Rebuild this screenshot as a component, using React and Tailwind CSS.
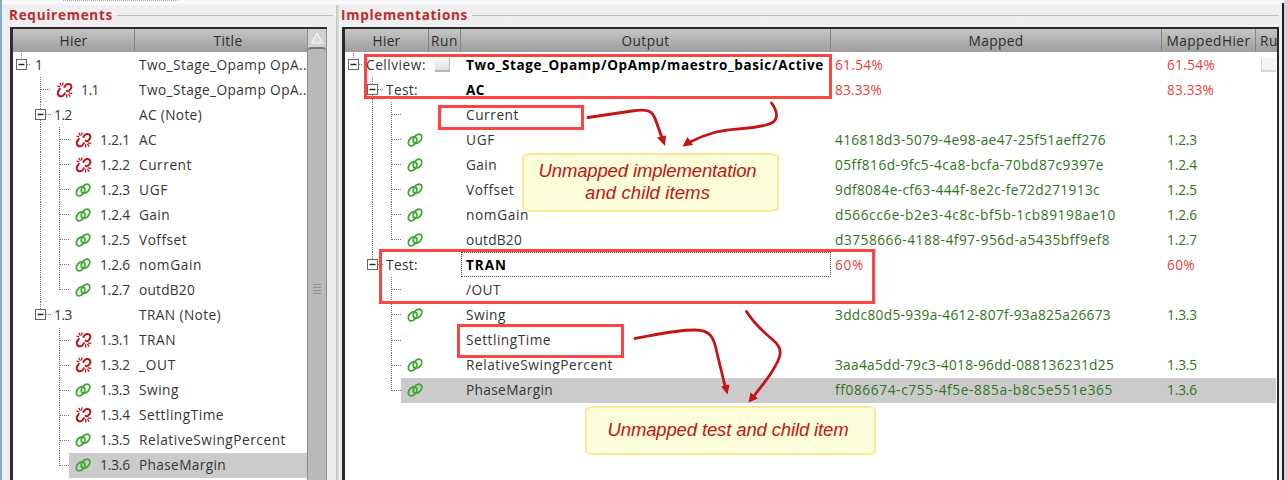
import React, { useLayoutEffect, useRef } from "react";

// Text justified to a given pixel width through letter spacing.
function T({ children, w, className = "" }) {
  const ref = useRef(null);
  useLayoutEffect(() => {
    const el = ref.current;
    if (!w) return;
    el.style.letterSpacing = "0px";
    const natural = el.getBoundingClientRect().width;
    el.style.letterSpacing = `${(w - natural) / (String(children).length)}px`;
  }, [children, w]);
  return (
    <span ref={ref} className={`inline-block whitespace-pre ${className}`}>
      {children}
    </span>
  );
}

function LinkIcon() {
  return (
    <svg width="16" height="16" viewBox="0 0 16 16" fill="none" stroke="#3fa535" strokeWidth="1.800" className="shrink-0">
      <ellipse cx="5.600" cy="9.300" rx="3.500" ry="5.100" transform="rotate(42 5.600 9.300)" />
      <ellipse cx="10.500" cy="6.700" rx="3.500" ry="5.100" transform="rotate(42 10.500 6.700)" />
    </svg>
  );
}

function BrokenIcon() {
  return (
    <svg width="17" height="16" viewBox="0 0 16 16" fill="none" stroke="#b5121b" strokeLinecap="round" className="-mr-px shrink-0">
      <path strokeWidth="2" d="M7.800 5L9.200 3.100C10.300 1.700 12.500 1.500 13.800 2.600C15.200 3.700 15.200 5.700 14 7.100L12.600 8.600C12 9.200 10.900 9.300 10.200 8.700" />
      <path strokeWidth="2" d="M3.300 6.800L2.100 8.700C0.900 10.300 1 12.500 2.400 13.600C3.900 14.800 6 14.500 7.200 13L8.400 11.200" />
      <path strokeWidth="1.300" d="M3.600 1.400L4.600 3.300M6.400 0.900L6.200 2.800M1.400 4.200L3.200 4.700M10.200 12.700L10.200 15M12.200 12.200L13.400 14.300M13 10.800L15.100 11.300" />
    </svg>
  );
}

// Dotted branches of one row: continuing verticals, expander box or leaf stub.
function Guides({ kind, last }) {
  const dot = { stroke: "#777", strokeWidth: 1, strokeDasharray: "1 1" };
  return (
    <svg width="69" height="25" viewBox="0 0 69 25" className="absolute left-0 top-0">
      {kind === "root" && <path d="M8.5 1V7M14 12.500H18" {...dot} />}
      {kind === "leaf1" && <path d="M27.500 0V25M28 12.500H38" {...dot} />}
      {kind === "node" && (
        <path d={last ? "M27.500 0V7M33 12.500H38" : "M27.500 0V25M33 12.500H38"} {...dot} />
      )}
      {kind === "leaf" && !last && <path d="M27.500 0V25" {...dot} />}
      {(kind === "root" || kind === "node") && (
        <g transform={kind === "root" ? "translate(3 7)" : "translate(22 7)"}>
          <rect x="0.500" y="0.500" width="10" height="10" fill="#fff" stroke="#666" />
          <path d="M2.500 5.500H8.500" stroke="#222" strokeWidth="1.400" />
        </g>
      )}
    </svg>
  );
}

function Branch({ end }) {
  return (
    <svg width="12" height="25" viewBox="0 0 12 25" className="absolute left-[46px] top-0">
      <path d={end ? "M0.500 0V13M1 12.500H10" : "M0.500 0V25M1 12.500H10"} fill="none" stroke="#777" strokeDasharray="1 1" />
    </svg>
  );
}

const REQ = [
  ["root", "1", "Two_Stage_Opamp OpA..", 168],
  ["leaf1", "1.1", "Two_Stage_Opamp OpA..", 168, "x"],
  ["node", "1.2", "AC (Note)", 63],
  ["leaf", "1.2.1", "AC", 18, "x"],
  ["leaf", "1.2.2", "Current", 53, "x"],
  ["leaf", "1.2.3", "UGF", 29, "o"],
  ["leaf", "1.2.4", "Gain", 31, "o"],
  ["leaf", "1.2.5", "Voffset", 48, "o"],
  ["leaf", "1.2.6", "nomGain", 63, "o"],
  ["leaf", "1.2.7", "outdB20", 56, "o", "end"],
  ["node", "1.3", "TRAN (Note)", 82, "", "last"],
  ["leaf", "1.3.1", "TRAN", 37, "x", "tail"],
  ["leaf", "1.3.2", "_OUT", 37, "x", "tail"],
  ["leaf", "1.3.3", "Swing", 40, "o", "tail"],
  ["leaf", "1.3.4", "SettlingTime", 85, "x", "tail"],
  ["leaf", "1.3.5", "RelativeSwingPercent", 147, "o", "tail"],
  ["leaf", "1.3.6", "PhaseMargin", 87, "o", "tail end"],
];

const IMPL = [
  { k: "root", h: "Cellview:", hw: 60, t: "Two_Stage_Opamp/OpAmp/maestro_basic/Active", w: 358, m: "61.54%", mw: 48, n: "61.54%", nw: 48, run: true },
  { k: "node", h: "Test:", hw: 32, t: "AC", w: 19, m: "83.33%", mw: 47, n: "83.33%", nw: 47 },
  { k: "leaf", t: "Current", w: 53 },
  { k: "leaf", i: 1, t: "UGF", w: 29, m: "416818d3-5079-4e98-ae47-25f51aeff276", mw: 271, n: "1.2.3" },
  { k: "leaf", i: 1, t: "Gain", w: 31, m: "05ff816d-9fc5-4ca8-bcfa-70bd87c9397e", mw: 269, n: "1.2.4" },
  { k: "leaf", i: 1, t: "Voffset", w: 48, m: "9df8084e-cf63-444f-8e2c-fe72d271913c", mw: 265, n: "1.2.5" },
  { k: "leaf", i: 1, t: "nomGain", w: 63, m: "d566cc6e-b2e3-4c8c-bf5b-1cb89198ae10", mw: 281, n: "1.2.6" },
  { k: "leaf", i: 1, t: "outdB20", w: 56, m: "d3758666-4188-4f97-956d-a5435bff9ef8", mw: 275, n: "1.2.7", end: true },
  { k: "node", h: "Test:", hw: 32, t: "TRAN", w: 41, m: "60%", mw: 29, n: "60%", nw: 28, focus: true, last: true },
  { k: "leaf", t: "/OUT", w: 35, tail: true },
  { k: "leaf", i: 1, t: "Swing", w: 40, m: "3ddc80d5-939a-4612-807f-93a825a26673", mw: 276, n: "1.3.3", tail: true },
  { k: "leaf", t: "SettlingTime", w: 85, tail: true },
  { k: "leaf", i: 1, t: "RelativeSwingPercent", w: 147, m: "3aa4a5dd-79c3-4018-96dd-088136231d25", mw: 279, n: "1.3.5", tail: true },
  { k: "leaf", i: 1, t: "PhaseMargin", w: 87, m: "ff086674-c755-4f5e-885a-b8c5e551e365", mw: 278, n: "1.3.6", tail: true, end: true, sel: true },
];

function ReqRow({ row }) {
  const [kind, num, title, w, icon, flags = ""] = row;
  const leaf = kind === "leaf";
  const sel = num === "1.3.6";
  const indent = { root: "pl-[22px]", leaf1: "pl-[43px]", node: "pl-[41px]", leaf: "pl-[62px]" }[kind];
  return (
    <div className="relative flex h-[25.05px] w-[294px] shrink-0 items-center">
      {sel && <div className="absolute inset-y-0 left-[56px] right-0 bg-[#cbcbcb]" />}
      <Guides kind={kind} last={/last|tail/.test(flags)} />
      {leaf && <Branch end={flags.includes("end")} />}
      <div className={`relative flex w-[126px] shrink-0 items-center gap-[9px] ${indent}`}>
        {icon === "x" && <BrokenIcon />}
        {icon === "o" && <LinkIcon />}
        <T w={leaf ? 30 : num === "1" ? undefined : 18}>{num}</T>
      </div>
      <T w={w} className="relative">{title}</T>
    </div>
  );
}

function RunBox() {
  return <div className="h-[14px] w-[15px] border-b-2 border-r border-[#b9b9b9] bg-linear-to-b from-[#fafafa] to-[#dedede]" />;
}

function ImplRow({ r }) {
  const strong = r.k !== "leaf";
  return (
    <div className="relative flex h-[25.05px] w-[931px] shrink-0 items-center overflow-hidden">
      {r.sel && <div className="absolute inset-y-0 left-[56px] right-0 bg-[#cbcbcb]" />}
      <Guides kind={r.k} last={r.last || r.tail} />
      {r.k === "leaf" && <Branch end={r.end} />}
      <div className={`relative flex w-[84px] shrink-0 items-center ${r.k === "root" ? "pl-[21px]" : r.k === "node" ? "pl-[41px]" : "pl-[62px]"}`}>
        {r.h && <T w={r.hw}>{r.h}</T>}
        {r.i && <LinkIcon />}
      </div>
      <div className="relative flex w-[32px] shrink-0 pl-[6px]">{r.run && <RunBox />}</div>
      <div className={`relative flex h-full w-[370px] shrink-0 items-center pl-[4px] ${r.focus ? "border border-dotted border-[#444]" : "border border-transparent"}`}>
        <T w={r.w} className={strong ? "text-[13.500px] font-bold text-black" : ""}>{r.t}</T>
      </div>
      <div className={`relative w-[332px] shrink-0 pl-[4px] ${strong ? "text-[#e2433f]" : "text-[#2f7420]"}`}>
        {r.m && <T w={r.mw}>{r.m}</T>}
      </div>
      <div className={`relative w-[98px] shrink-0 pl-[4px] ${strong ? "text-[#e2433f]" : "text-[#2f7420]"}`}>
        {r.n && <T w={r.nw || 30}>{r.n}</T>}
      </div>
      {r.run && <div className="h-[14px] w-[15px] shrink-0 border-b-2 border-l border-[#d8d8d8] bg-[#f4f4f4]" />}
    </div>
  );
}

function Head({ children, w, className, first }) {
  return (
    <div className={`flex h-full shrink-0 items-center justify-center overflow-hidden ${first ? "" : "border-l border-[#858585]"} ${className}`}>
      <T w={w}>{children}</T>
    </div>
  );
}

function GroupTitle({ children, w }) {
  return (
    <div className="flex h-[20px] shrink-0 items-center gap-[4px] pr-[3px]">
      <T w={w} className="-mt-px text-[13.500px] font-bold text-[#be2a2e]">{children}</T>
      <div className="h-px flex-1 bg-[#bdbdbd]" />
    </div>
  );
}

const headBar = "flex h-[23px] shrink-0 overflow-hidden bg-linear-to-b from-[#c6c6c6] to-[#9d9d9d] text-[#2c2c2c]";

function Outline({ className }) {
  return <div className={`absolute border-3 border-[#ff4343] ${className}`} />;
}

function Callout({ children, className }) {
  return (
    <div className={`absolute flex items-center justify-center rounded-[10px/4px] border-2 border-[#ffe793] bg-[#fcfdd9] text-center font-['Liberation_Sans',sans-serif] text-[18.500px] leading-[22px] text-[#be1515] italic ${className}`}>
      {children}
    </div>
  );
}

export default function App() {
  return (
    <div className="relative flex h-[480px] w-[1287px] overflow-hidden bg-[#efefef] bg-linear-to-b from-[#f3f3f3] via-[#fefefe] via-[3px] to-[#efefef] to-[5px] font-['Open_Sans','Noto_Sans',sans-serif] text-[13.700px] leading-[18px] text-[#353535]">
      <div className="w-[2px] shrink-0 bg-[#89a9d4]" />
      <div className="flex w-[334px] shrink-0 flex-col pl-[7px]">
        <div className="h-[5px] shrink-0" />
        <GroupTitle w={104}>Requirements</GroupTitle>
        <div className="mt-[2px] ml-px flex flex-1 w-[317px] overflow-hidden border-t-2 border-l-3 border-[#302c32] bg-white">
          <div className="flex w-[294px] shrink-0 flex-col">
            <div className={headBar}>
              <Head first w={28} className="w-[121px]">Hier</Head>
              <Head w={29} className="w-[187px]">Title</Head>
            </div>
            {REQ.map((row) => <ReqRow key={row[1]} row={row} />)}
          </div>
          <div className="flex w-[20px] shrink-0 flex-col border-x border-[#8c8c8c] bg-[#b9b9b9]">
            <div className="flex h-[18px] items-center justify-center bg-[#d2d2d2]">
              <svg width="14" height="12" viewBox="0 0 14 12"><path d="M7 1L12.500 11H1.500Z" fill="#dcdcdc" stroke="#fafafa" /></svg>
            </div>
            <div className="flex flex-1 flex-col items-center gap-[2px] rounded-t-[4px] border-t-2 border-[#777] pt-[235px]">
              <div className="h-px w-[8px] bg-[#8c8c8c]" />
              <div className="h-px w-[8px] bg-[#8c8c8c]" />
              <div className="h-px w-[8px] bg-[#8c8c8c]" />
              <div className="h-px w-[8px] bg-[#8c8c8c]" />
            </div>
          </div>
        </div>
      </div>
      <div className="mt-[5px] w-[3px] shrink-0 border-l border-[#c4c4c4] bg-[#d9d9d9]" />
      <div className="flex w-[943px] shrink-0 flex-col pl-[2px]">
        <div className="h-[5px] shrink-0" />
        <GroupTitle w={127}>Implementations</GroupTitle>
        <div className="mt-[2px] ml-px flex flex-1 w-[937px] flex-col overflow-hidden border-t-2 border-r-2 border-l-3 border-[#282828] bg-white">
          <div className={headBar}>
            <Head first w={28} className="w-[83px]">Hier</Head>
            <Head w={27} className="w-[32px]">Run</Head>
            <Head w={48} className="w-[370px]">Output</Head>
            <Head w={55} className="w-[331px]">Mapped</Head>
            <Head w={84} className="w-[94px]">MappedHier</Head>
            <Head w={18} className="w-[27px]">Ru</Head>
          </div>
          {IMPL.map((r, i) => <ImplRow key={i} r={r} />)}
        </div>
      </div>
      <div className="mt-[3px] w-[2px] shrink-0 bg-[#1e1e22]" />
      <div className="flex-1 bg-[#cdd4ea]" />

      <div className="absolute left-[63px] top-0 w-[115px] border-t border-dotted border-[#b0b0b0]" />
      <Outline className="left-[364px] top-[54px] h-[45px] w-[468px]" />
      <Outline className="left-[438px] top-[105px] h-[25px] w-[146px]" />
      <Outline className="left-[379px] top-[249px] h-[55px] w-[496px]" />
      <Outline className="left-[457px] top-[324px] h-[34px] w-[167px]" />
      <Callout className="left-[522px] top-[153px] h-[59px] w-[257px] pr-[6px] pb-[2px]">
        <div>
          <T w={218} className="block">Unmapped implementation</T>
          <br />
          <T w={125}>and child items</T>
        </div>
      </Callout>
      <Callout className="left-[585px] top-[406px] h-[49px] w-[291px] pr-[5px] pb-[2px]">
        <T w={241}>Unmapped test and child item</T>
      </Callout>
      <svg width="1287" height="480" viewBox="0 0 1287 480" className="absolute inset-0" fill="none" stroke="#c41414" strokeWidth="2.800" strokeLinecap="round">
        <path d="M588 117.500L632 111C650 108 653 112 656 121L662 138" />
        <path d="M771.500 103C778 112 780 122 766 125C750 129 735 128 716 132C705 135 698 138 690 142" />
        <path d="M635 338.500C655 335 675 330 695 330C711 330 714 338 717 353L725 386" />
        <path d="M746.500 311.500C753 322 761 330 773 340C784 349 781 357 773 370C767 380 760 388 754 396" />
        <g fill="#c41414" stroke="none">
          <path d="M665 146L657 137.500L666 135.500Z" />
          <path d="M682.500 146.500L687.500 137L693 145Z" />
          <path d="M727.500 394.500L721 386.500L729.500 384.500Z" />
          <path d="M748.500 402.500L750.500 392.500L758 398.500Z" />
        </g>
      </svg>
    </div>
  );
}
